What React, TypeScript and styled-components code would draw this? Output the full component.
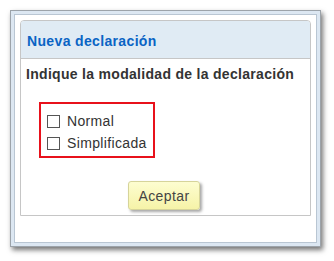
import styled, { createGlobalStyle } from "styled-components";

const GlobalStyle = createGlobalStyle`
  html, body {
    margin: 0;
    padding: 0;
    background: #ffffff;
    font-family: "Liberation Sans", Arial, sans-serif;
  }
`;

const Page = styled.div`
  padding: 10px;
`;

const Window = styled.div`
  width: 311px;
  height: 237px;
  box-sizing: border-box;
  border: 1px solid #9ca3aa;
  background: #dce7f2;
  padding: 3px;
  box-shadow: 2px 3px 5px rgba(0, 0, 0, 0.55);
`;

const WindowInner = styled.div`
  height: 100%;
  box-sizing: border-box;
  border: 1px solid #b9c6d3;
  background: #ffffff;
  padding: 5px 4px 0 5px;
`;

const Panel = styled.div`
  width: 291px;
  height: 196px;
  box-sizing: border-box;
  border: 1px solid #c6c6c6;
  border-radius: 4px 4px 0 0;
  display: flex;
  flex-direction: column;
`;

const PanelHeader = styled.div`
  height: 38px;
  border-bottom: 1px solid #c6c6c6;
  border-radius: 3px 3px 0 0;
  background: #e0ebf4;
  display: flex;
  align-items: center;
  padding: 3px 6px 0;
  box-sizing: border-box;
  color: #0a64c4;
  font-weight: bold;
  font-size: 14px;
  letter-spacing: 0.35px;
`;

const PanelBody = styled.div`
  flex: 1;
  display: flex;
  flex-direction: column;
  padding: 7px 5px 0 5px;
`;

const Question = styled.div`
  font-size: 14px;
  font-weight: bold;
  color: #333333;
  line-height: 16px;
  letter-spacing: 0.3px;
`;

const OptionBox = styled.div`
  margin: 20px 0 0 13px;
  width: 116px;
  height: 56px;
  box-sizing: border-box;
  border: 2px solid #e8111b;
  display: flex;
  flex-direction: column;
  gap: 6px;
  padding: 9px 0 0 6px;
`;

const Option = styled.label`
  display: flex;
  align-items: center;
  gap: 7px;
  font-size: 14px;
  color: #333333;
  line-height: 16px;
  letter-spacing: 0.35px;
`;

const Check = styled.span`
  width: 13px;
  height: 13px;
  box-sizing: border-box;
  border: 1px solid #555555;
  background: #ffffff;
  display: inline-block;
`;

const Actions = styled.div`
  display: flex;
  justify-content: center;
  margin-top: 23px;
  padding-right: 3px;
`;

const AcceptButton = styled.button`
  width: 72px;
  height: 29px;
  border: 1px solid #d6d49a;
  border-radius: 3px;
  background: linear-gradient(#fdfdd0, #f6f3a8);
  color: #444444;
  font-family: "Liberation Sans", Arial, sans-serif;
  font-size: 14px;
  letter-spacing: 0.4px;
  padding: 0;
  box-shadow: 2px 2px 3px rgba(0, 0, 0, 0.35);
`;

export default function App() {
  return (
    <>
      <GlobalStyle />
      <Page>
        <Window>
          <WindowInner>
            <Panel>
              <PanelHeader>Nueva declaración</PanelHeader>
              <PanelBody>
                <Question>Indique la modalidad de la declaración</Question>
                <OptionBox>
                  <Option>
                    <Check />
                    Normal
                  </Option>
                  <Option>
                    <Check />
                    Simplificada
                  </Option>
                </OptionBox>
                <Actions>
                  <AcceptButton>Aceptar</AcceptButton>
                </Actions>
              </PanelBody>
            </Panel>
          </WindowInner>
        </Window>
      </Page>
    </>
  );
}
